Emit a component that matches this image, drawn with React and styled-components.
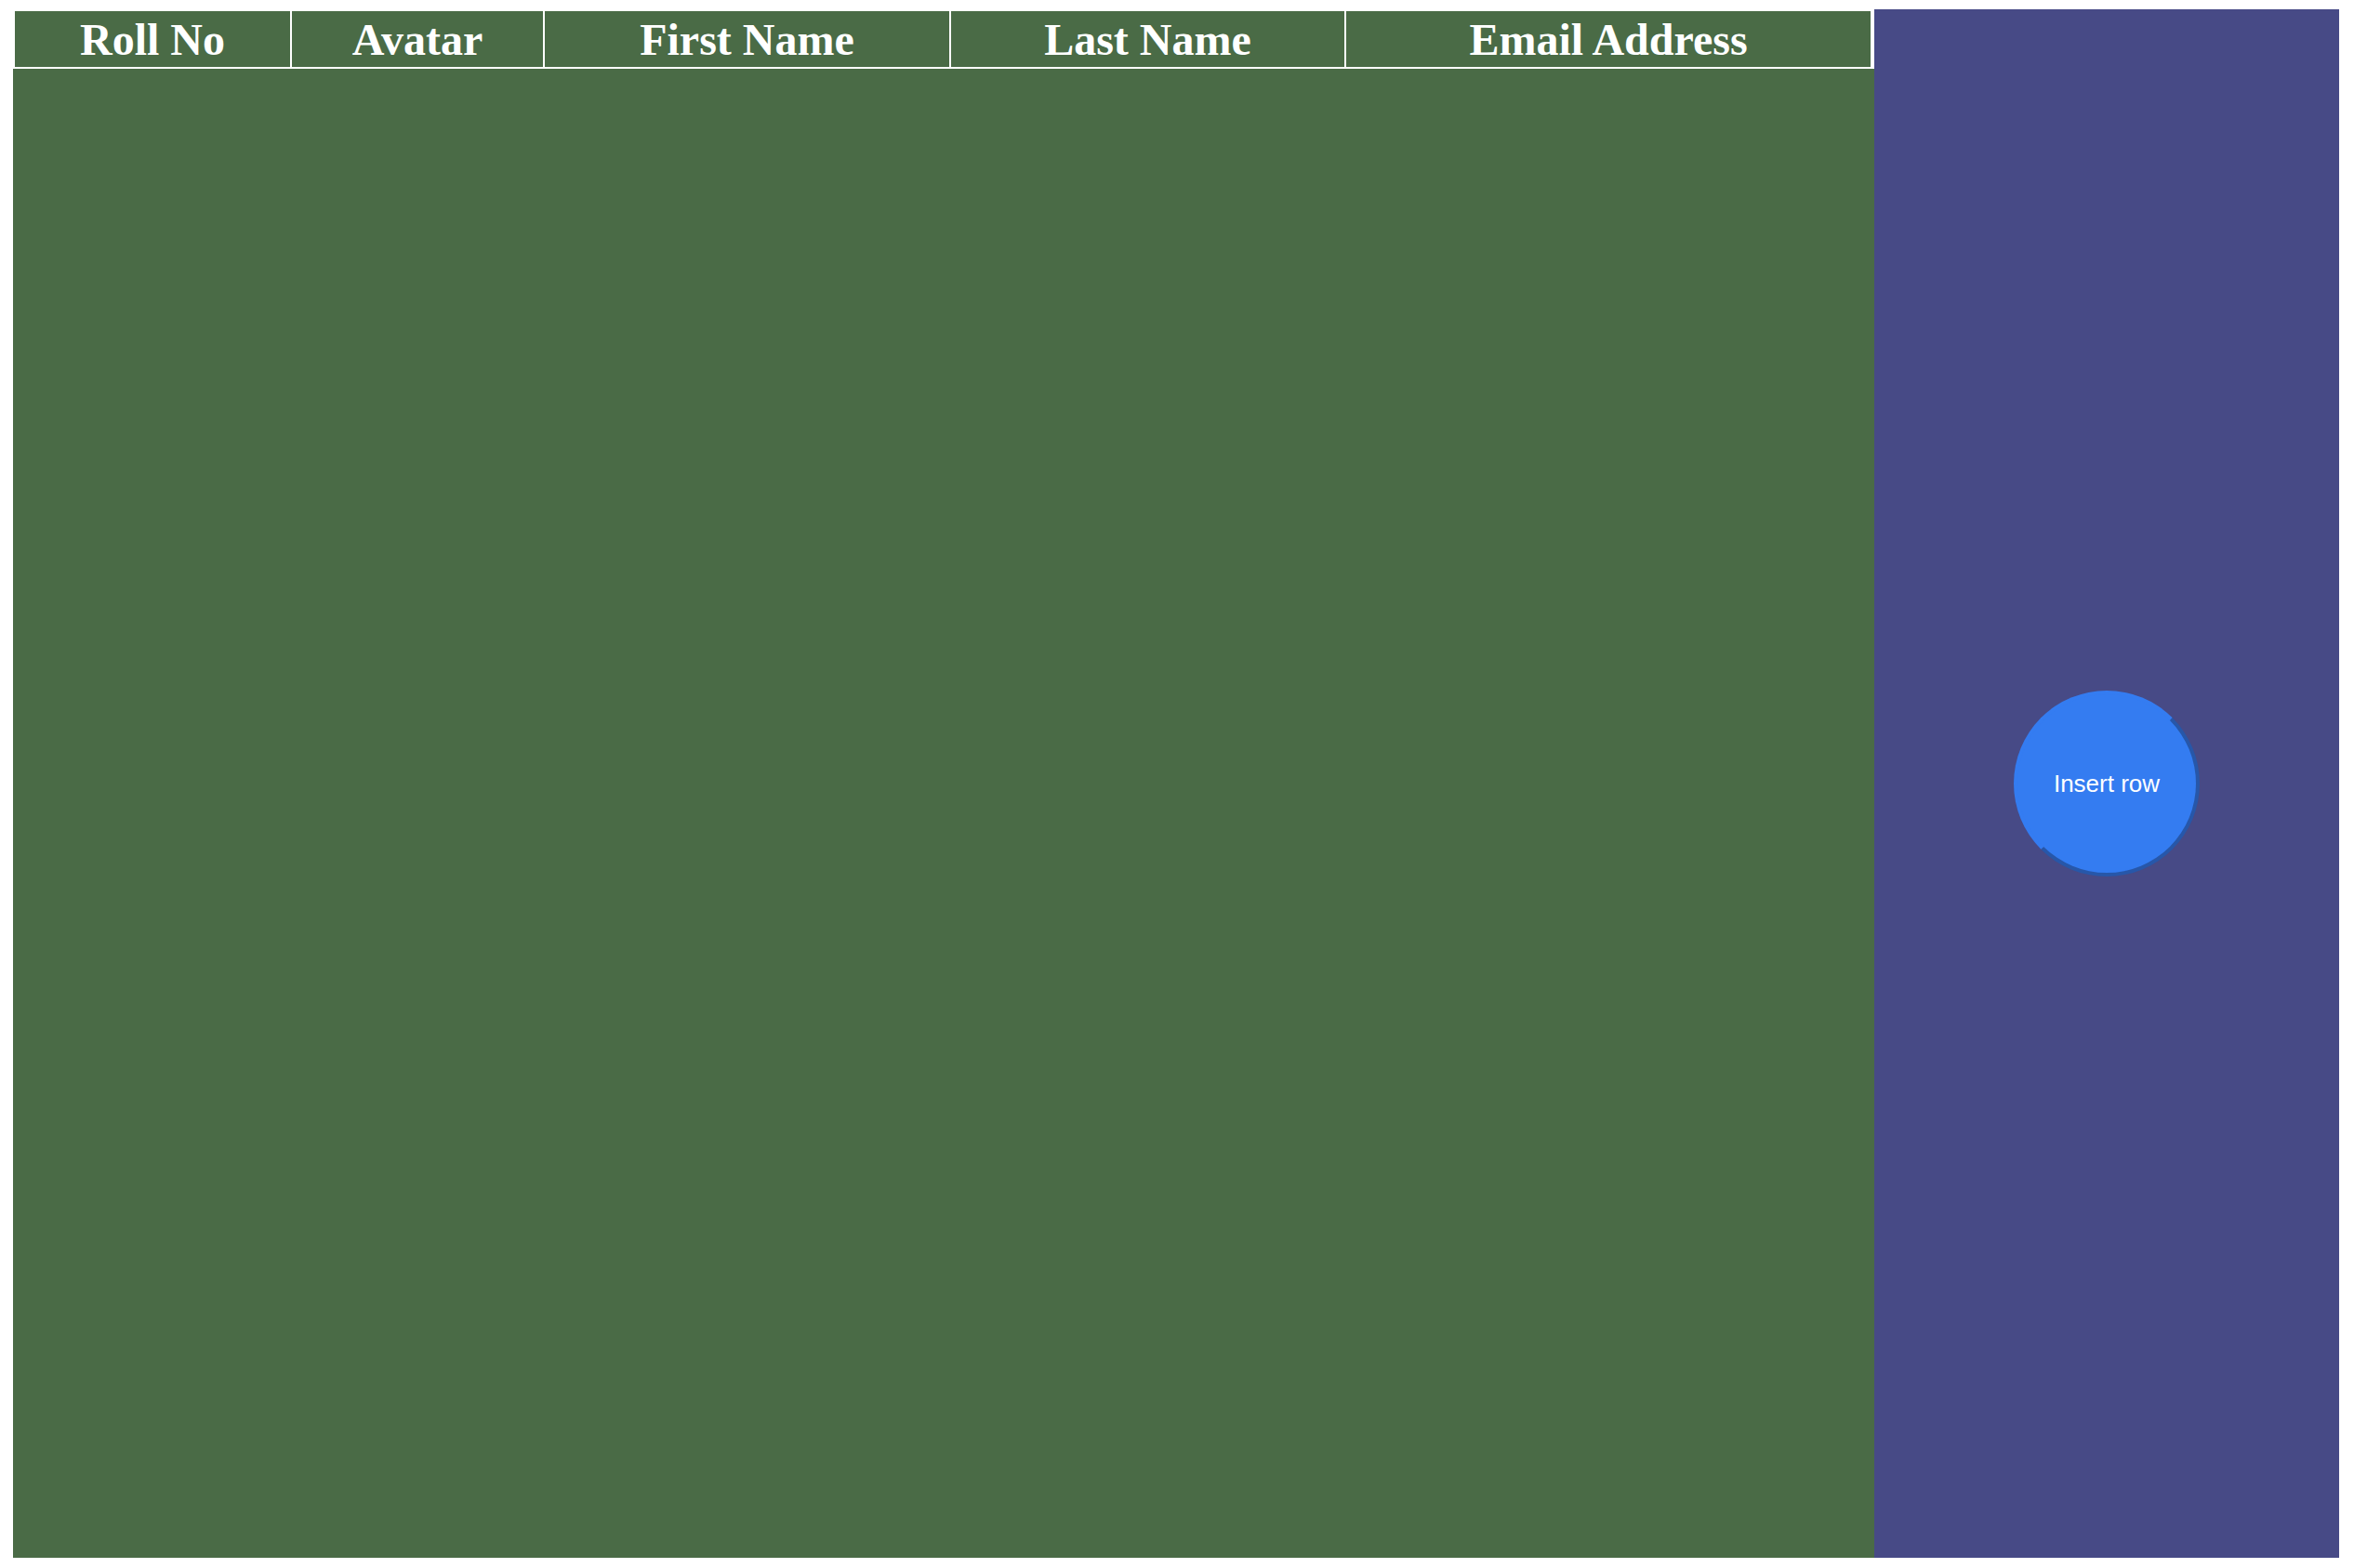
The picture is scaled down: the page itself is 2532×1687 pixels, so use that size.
import React from "react";
import styled, { createGlobalStyle } from "styled-components";

const GlobalStyle = createGlobalStyle`
  html, body {
    margin: 0;
    padding: 0;
    background: #ffffff;
  }
  body {
    font-family: "Liberation Serif", "Times New Roman", serif;
  }
`;

const Page = styled.div`
  display: flex;
  width: 2502px;
  height: 1666px;
  margin: 10px 0 0 14px;
`;

const TablePanel = styled.section`
  display: flex;
  flex-direction: column;
  width: 2002px;
  flex: 0 0 2002px;
`;

const HeaderRow = styled.div`
  display: grid;
  grid-template-columns: 296px 270px 435px 423px 564px;
  gap: 2px;
  padding: 2px;
  background: #ffffff;
`;

const HeaderCell = styled.div`
  height: 60px;
  display: flex;
  align-items: center;
  justify-content: center;
  background: #4a6b46;
  color: #ffffff;
  font-family: "Liberation Serif", "Times New Roman", serif;
  font-weight: bold;
  font-size: 48px;
  line-height: 1;
  padding-top: 2px;
  box-sizing: border-box;
`;

const TableBody = styled.div`
  flex: 1;
  background: #4a6b46;
`;

const SidePanel = styled.aside`
  flex: 1;
  background: #474a86;
  display: flex;
  align-items: center;
  justify-content: center;
`;

const InsertButton = styled.button`
  width: 200px;
  height: 200px;
  border-radius: 50%;
  box-sizing: border-box;
  border: 4px solid;
  border-color: #347cf1 #2757a9 #2757a9 #347cf1;
  background: #347cf1;
  color: #ffffff;
  font-family: "Liberation Sans", Arial, Helvetica, sans-serif;
  font-size: 26px;
  padding: 0;
  cursor: pointer;
`;

const columns = ["Roll No", "Avatar", "First Name", "Last Name", "Email Address"];

export default function App() {
  return (
    <>
      <GlobalStyle />
      <Page>
        <TablePanel>
          <HeaderRow>
            {columns.map((c) => (
              <HeaderCell key={c}>{c}</HeaderCell>
            ))}
          </HeaderRow>
          <TableBody />
        </TablePanel>
        <SidePanel>
          <InsertButton>Insert row</InsertButton>
        </SidePanel>
      </Page>
    </>
  );
}
